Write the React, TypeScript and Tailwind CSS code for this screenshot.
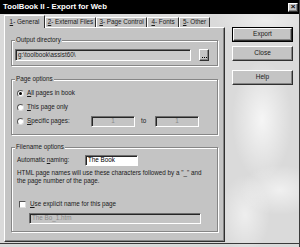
import React, { FC, ReactNode } from "react";

const raised =
  "bg-[#c4c4c4] border border-t-white border-l-white border-r-[#303030] border-b-[#303030] shadow-[inset_-1px_-1px_0_#858585]";
const sunken =
  "border border-t-[#6e6e6e] border-l-[#6e6e6e] border-r-white border-b-white shadow-[inset_1px_1px_0_#262626]";

const Group: FC<{ label: string; className?: string; children: ReactNode }> = ({
  label,
  className = "",
  children,
}) => (
  <div
    className={`relative w-[207px] border border-[#868686] shadow-[inset_1px_1px_0_#fff,1px_1px_0_#fff] ${className}`}
  >
    <span className="absolute left-[3px] -top-[6px] px-[1px] bg-[#c4c4c4] text-[6.3px] leading-[9px] whitespace-nowrap">
      {label}
    </span>
    {children}
  </div>
);

const Radio: FC<{ checked?: boolean }> = ({ checked }) => (
  <div className="w-[7px] h-[7px] rounded-full bg-white border border-t-[#555] border-l-[#555] border-r-[#ddd] border-b-[#ddd] flex items-center justify-center shrink-0">
    {checked && <div className="w-[3px] h-[3px] rounded-full bg-black" />}
  </div>
);

const Field: FC<{ value: string; disabled?: boolean; className?: string }> = ({
  value,
  disabled,
  className = "",
}) => (
  <div
    className={`${sunken} ${className} flex items-center px-[2px] text-[6.3px] leading-none whitespace-nowrap overflow-hidden ${
      disabled ? "text-[#8a8a8a]" : ""
    }`}
  >
    {value}
  </div>
);

const Button: FC<{ label: string; isDefault?: boolean; className?: string }> = ({
  label,
  isDefault,
  className = "",
}) =>
  isDefault ? (
    <div className={`h-[15px] border border-black flex ${className}`}>
      <div className={`${raised} flex-1 flex items-center justify-center text-[6.5px] leading-none`}>
        {label}
      </div>
    </div>
  ) : (
    <div
      className={`${raised} h-[15px] flex items-center justify-center text-[6.5px] leading-none ${className}`}
    >
      {label}
    </div>
  );

const tabs: { key: string; rest: string; w: string }[] = [
  { key: "1", rest: " - General", w: "w-[41px]" },
  { key: "2", rest: " - External Files", w: "w-[51px]" },
  { key: "3", rest: " - Page Control", w: "w-[51px]" },
  { key: "4", rest: " - Fonts", w: "w-[32px]" },
  { key: "5", rest: " - Other", w: "w-[31px]" },
];

export default function App() {
  return (
    <div className="w-[300px] h-[247px] overflow-hidden flex flex-col text-[#1a1a1a] border-r border-[#3a3a3a] [font-family:'Liberation_Sans',Arial,sans-serif] bg-[#dadada] bg-[radial-gradient(ellipse_30px_60px_at_262px_120px,rgba(255,255,255,0.75),transparent),radial-gradient(ellipse_40px_25px_at_280px_190px,rgba(255,255,255,0.6),transparent),radial-gradient(ellipse_25px_40px_at_245px_215px,rgba(255,255,255,0.55),transparent),radial-gradient(ellipse_50px_20px_at_265px_20px,rgba(255,255,255,0.5),transparent)]">
      {/* title bar */}
      <div className="h-[14px] shrink-0 bg-black flex items-center justify-between pl-[3px] pr-[1px]">
        <span className="text-white font-bold text-[7.75px] leading-none whitespace-nowrap">
          ToolBook II - Export for Web
        </span>
        <div className={`${raised} w-[10px] h-[9px] flex items-center justify-center text-[8px] leading-none font-bold text-black`}>
          ×
        </div>
      </div>

      <div className="h-[228px] shrink-0 flex pl-[4px] pt-[1px]">
        <div className="w-[221px] flex flex-col">
          {/* tabs */}
          <div className="h-[12px] flex items-end">
            {tabs.map((t, i) => (
              <div
                key={t.key}
                className={`${t.w} ${
                  i === 0 ? "h-[13px] -mb-[1px] relative z-10" : "h-[10px]"
                } bg-[#c4c4c4] border-t border-l border-r border-t-white border-l-white border-r-[#303030] flex items-center justify-center text-[6.3px] leading-none whitespace-nowrap`}
              >
                <span className="underline">{t.key}</span>
                {t.rest}
              </div>
            ))}
          </div>

          {/* panel */}
          <div className={`${raised} h-[215px] flex flex-col pt-[12px] pl-[6px]`}>
            <Group label="Output directory" className="h-[26px]">
              <div className="pt-[8px] pl-[3px] flex items-center gap-[8px]">
                <Field value="g:\toolbook\assist60\" className="w-[176px] h-[12px] bg-[#cbcbcb]" />
                <div className={`${raised} w-[10px] h-[12px] flex items-end justify-center pb-[2px]`}>
                  <div className="flex gap-[1px]">
                    <span className="w-[1px] h-[1px] bg-black" />
                    <span className="w-[1px] h-[1px] bg-black" />
                    <span className="w-[1px] h-[1px] bg-black" />
                  </div>
                </div>
              </div>
            </Group>

            <Group label="Page options" className="h-[56px] mt-[13px]">
              <div className="pt-[6px] pl-[5px] flex flex-col text-[6.3px] leading-none">
                <div className="h-[14px] flex items-center gap-[3px]">
                  <Radio checked />
                  <span>
                    <span className="underline">A</span>ll pages in book
                  </span>
                </div>
                <div className="h-[14px] flex items-center gap-[3px]">
                  <Radio />
                  <span>
                    <span className="underline">T</span>his page only
                  </span>
                </div>
                <div className="h-[14px] flex items-center">
                  <Radio />
                  <span className="ml-[3px] w-[64px]">
                    <span className="underline">S</span>pecific pages:
                  </span>
                  <Field value="1" disabled className="w-[44px] h-[11px] justify-center bg-[#c4c4c4]" />
                  <span className="w-[20px] pl-[6px]">to</span>
                  <Field value="1" disabled className="w-[44px] h-[11px] justify-center bg-[#c4c4c4]" />
                </div>
              </div>
            </Group>

            <Group label="Filename options" className="h-[85px] mt-[12px]">
              <div className="pt-[6px] pl-[5px] flex flex-col text-[6.3px] leading-none">
                <div className="h-[13px] flex items-center">
                  <span className="w-[68px]">
                    Automatic <span className="underline">n</span>aming:
                  </span>
                  <Field value="The Book" className="w-[53px] h-[11px] bg-white text-black" />
                </div>
                <p className="mt-[2px] leading-[8px] whitespace-nowrap">
                  HTML page names will use these characters followed by a "_" and
                  <br />
                  the page number of the page.
                </p>
                <div className="mt-[14px] h-[10px] flex items-center gap-[4px] pl-[2px]">
                  <div className="w-[7px] h-[7px] bg-white border border-t-[#555] border-l-[#555] border-r-[#ddd] border-b-[#ddd] shrink-0" />
                  <span>
                    <span className="underline">U</span>se explicit name for this page
                  </span>
                </div>
                <Field value="The Bo_1.htm" disabled className="mt-[4px] ml-[12px] w-[172px] h-[11px] bg-[#c4c4c4]" />
              </div>
            </Group>
          </div>
        </div>

        {/* buttons */}
        <div className="ml-[7px] w-[61px] pt-[12px] flex flex-col">
          <Button label="Export" isDefault />
          <Button label="Close" className="mt-[4px]" />
          <Button label="Help" className="mt-[9px]" />
        </div>
      </div>

      <div className="flex-1 mt-[1px] border-t border-[#3a3a3a]" />
    </div>
  );
}
